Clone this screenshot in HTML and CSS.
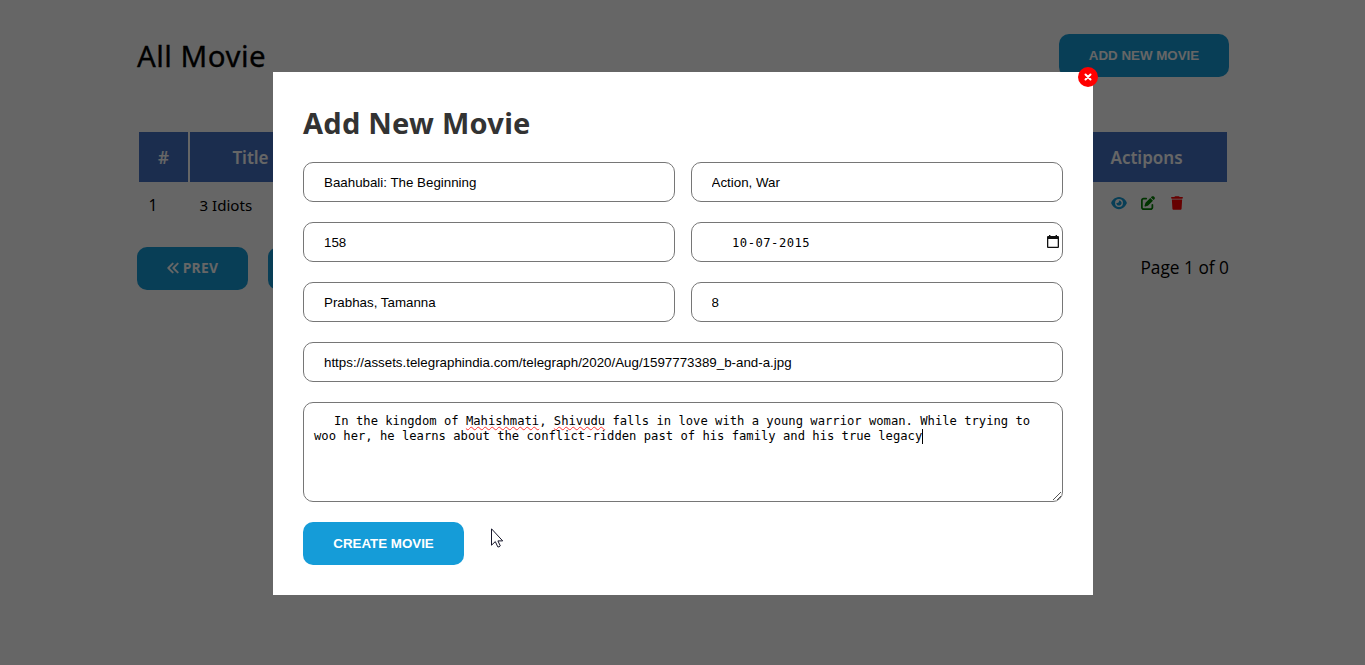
FILE: index.html
```html
<!DOCTYPE html>
<html lang="en">
<head>
<meta charset="utf-8">
<title>All Movie</title>
<link rel="stylesheet" href="styles.css">
</head>
<body>
<main class="page">
  <header class="page-head">
    <h1 class="page-title">All Movie</h1>
    <button class="btn btn-add">ADD NEW MOVIE</button>
  </header>
  <section class="table">
    <div class="th">#</div>
    <div class="th">Title</div>
    <div class="th"></div>
    <div class="th th-actions">Actipons</div>
    <div class="td td-num">1</div>
    <div class="td">3 Idiots</div>
    <div class="td"></div>
    <div class="td actions">
      <svg class="icon-eye" viewBox="0 0 576 512"><path fill="#159cd8" d="M288 32c-80.800 0-145.500 36.800-192.600 80.600C48.600 156 17.300 208 2.500 243.700c-3.300 7.900-3.300 16.700 0 24.600C17.300 304 48.600 356 95.400 399.400C142.500 443.200 207.200 480 288 480s145.500-36.800 192.600-80.600c46.800-43.500 78.100-95.400 93-131.100c3.300-7.900 3.300-16.700 0-24.600c-14.900-35.700-46.200-87.700-93-131.100C433.500 68.800 368.800 32 288 32zM144 256a144 144 0 1 1 288 0 144 144 0 1 1-288 0zm144-64c0 35.300-28.700 64-64 64c-7.100 0-13.900-1.200-20.300-3.300c-5.500-1.800-11.900 1.600-11.700 7.400c.3 6.900 1.300 13.800 3.200 20.700c13.700 51.200 66.400 81.600 117.600 67.900s81.600-66.400 67.900-117.600c-11.100-41.500-47.800-69.400-88.600-71.100c-5.800-.2-9.200 6.100-7.400 11.700c2.100 6.400 3.300 13.200 3.300 20.300z"/></svg>
      <svg class="icon-edit" viewBox="0 0 512 512"><path fill="green" d="M471.600 21.700c-21.900-21.900-57.300-21.900-79.200 0L362.300 51.700l97.900 97.900 30.100-30.100c21.900-21.900 21.900-57.300 0-79.200L471.600 21.700zm-299.200 220c-6.100 6.100-10.800 13.600-13.500 21.900l-29.600 88.800c-2.900 8.600-.6 18.100 5.800 24.600s15.900 8.700 24.600 5.800l88.800-29.600c8.200-2.700 15.700-7.400 21.900-13.500L437.700 172.300 339.700 74.300 172.400 241.700zM96 64C43 64 0 107 0 160V416c0 53 43 96 96 96H352c53 0 96-43 96-96V320c0-17.700-14.300-32-32-32s-32 14.300-32 32v96c0 17.700-14.300 32-32 32H96c-17.700 0-32-14.300-32-32V160c0-17.700 14.300-32 32-32h96c17.700 0 32-14.300 32-32s-14.300-32-32-32H96z"/></svg>
      <svg class="icon-trash" viewBox="0 0 448 512"><path fill="red" d="M135.200 17.700L128 32H32C14.300 32 0 46.300 0 64S14.300 96 32 96H416c17.700 0 32-14.300 32-32s-14.300-32-32-32H320l-7.200-14.300C307.400 6.800 296.300 0 284.200 0H163.800c-12.100 0-23.200 6.800-28.600 17.700zM416 128H32L53.200 467c1.600 25.300 22.600 45 47.900 45H346.900c25.300 0 46.300-19.700 47.900-45L416 128z"/></svg>
    </div>
  </section>
  <footer class="pager">
    <button class="btn btn-page"><svg class="icon-prev" viewBox="0 0 12 12" fill="none" stroke="#fff" stroke-width="1.900" stroke-linecap="round" stroke-linejoin="round"><path d="M5.700 1.600 1.300 6l4.400 4.400M10.700 1.600 6.300 6l4.400 4.400"/></svg><span>PREV</span></button>
    <button class="btn btn-page" aria-label="Next"></button>
    <span class="page-info">Page 1 of 0</span>
  </footer>
</main>

<div class="overlay">
  <form class="modal">
    <button type="button" class="close" aria-label="Close"><svg viewBox="0 0 10 10"><path d="M2.500 2.500l5 5M7.500 2.500 2.500 7.500" stroke="#fff" stroke-width="2" stroke-linecap="round"/></svg></button>
    <h2 class="modal-title">Add New Movie</h2>
    <div class="fields">
      <input class="field" value="Baahubali: The Beginning">
      <input class="field right" value="Action, War">
      <input class="field" value="158">
      <div class="field date"><span>10-07-2015</span><svg class="icon-cal" viewBox="0 0 12 13"><path fill="#111" fill-rule="evenodd" d="M2 0h1.400v1h5.200V0H10v1h1q1 0 1 1v10q0 1-1 1H1q-1 0-1-1V2q0-1 1-1h1zM1.300 4v7.700h9.400V4z"/></svg></div>
      <input class="field" value="Prabhas, Tamanna">
      <input class="field right" value="8">
      <input class="field wide" value="https://assets.telegraphindia.com/telegraph/2020/Aug/1597773389_b-and-a.jpg">
      <div class="field wide area">
        <p class="area-text">In the kingdom of <span class="typo">Mahishmati</span>, <span class="typo">Shivudu</span> falls in love with a young warrior woman. While trying to<br>woo her, he learns about the conflict-ridden past of his family and his true legacy<i class="caret"></i></p>
        <svg class="grip" viewBox="0 0 10 10" stroke="#555" stroke-width="1"><path d="M1 9 9 1M5 9 9 5"/></svg>
      </div>
    </div>
    <button type="button" class="btn btn-create">CREATE MOVIE</button>
  </form>
</div>
<svg class="cursor" viewBox="0 0 13 20"><path fill="#fff" stroke="#15152a" stroke-width="1" d="M.5.800v16.400l3.800-3.600 2.500 5.300q1.300.500 2.500-1l-2.400-5h4.800z"/></svg>
</body>
</html>
```
FILE: styles.css
```css
* { box-sizing: border-box; }
body {
  margin: 0;
  height: 665px;
  overflow: hidden;
  background: #fff;
  color: #000;
  font-family: "Noto Sans", "Open Sans", sans-serif;
}
h1, h2, p { margin: 0; }
.page { width: 1092px; margin: 0 auto 0 137px; padding-top: 34px; }
.page-head { display: flex; justify-content: space-between; height: 96px; }
.page-title {
  font-size: 29.500px;
  font-weight: 400;
  line-height: 44px;
  letter-spacing: 0.450px;
  -webkit-text-stroke: 0.300px #000;
}
.btn {
  height: 43px;
  padding: 0;
  border: 0;
  border-radius: 10px;
  background: #159cd8;
  color: #fff;
  font: bold 13.330px "Liberation Sans", Arial, sans-serif;
}
.btn-add { width: 170px; }
.table {
  display: grid;
  grid-template-columns: 49px 121px 1fr 161px;
  grid-template-rows: 50px 43px;
  gap: 2px;
  padding: 2px;
}
.th {
  background: #4472c4;
  color: #fff;
  font-size: 17px;
  font-weight: 600;
  line-height: 51px;
  text-align: center;
}
.td { padding-left: 9.500px; font-size: 15.600px; line-height: 42px; }
.td:nth-child(6) { font-size: 15.100px; }
.actions { display: flex; align-items: flex-start; padding: 12px 0 0 45px; }
.icon-eye { width: 16px; height: 14px; }
.icon-edit { width: 14px; height: 14px; margin-left: 14px; }
.icon-trash { width: 12px; height: 14px; margin-left: 15.500px; }
.pager { display: flex; align-items: center; gap: 20px; margin-top: 18px; }
.btn-page {
  display: flex;
  align-items: center;
  justify-content: center;
  gap: 4px;
  width: 111px;
  padding-bottom: 2px;
  font-family: "Open Sans", sans-serif;
  font-weight: 700;
  font-size: 13.800px;
  letter-spacing: 0.300px;
}
.icon-prev { width: 12px; height: 12px; }
.page-info { margin-left: auto; padding-bottom: 2px; font-family: "Open Sans", sans-serif; font-size: 17.300px; }
.overlay {
  position: fixed;
  inset: 0;
  display: flex;
  justify-content: center;
  align-items: flex-start;
  padding-top: 72px;
  background: rgba(0, 0, 0, 0.6);
}
.modal {
  position: relative;
  width: 820px;
  height: 523px;
  margin-left: 1px;
  padding: 29px 30px 30px;
  background: #fff;
}
.modal-title {
  height: 61px;
  color: #333;
  font-size: 29px;
  font-weight: 700;
  line-height: 43px;
  letter-spacing: 0.250px;
  white-space: nowrap;
}
.close {
  position: absolute;
  top: -5.500px;
  right: -5px;
  display: grid;
  place-items: center;
  width: 20px;
  height: 20px;
  padding: 0;
  border: 0;
  border-radius: 50%;
  background: red;
}
.close svg { width: 10px; height: 10px; }
.fields { display: grid; grid-template-columns: 372px 372px; gap: 20px 16px; }
.field {
  width: 100%;
  height: 40px;
  padding: 0 20px;
  border: 1px solid #767676;
  border-radius: 10px;
  background: #fff;
  color: #000;
  font: 13.330px "Liberation Sans", Arial, sans-serif;
}
.right { padding-left: 19.500px; }
.wide { grid-column: 1 / -1; }
.date {
  display: flex;
  align-items: center;
  justify-content: space-between;
  padding: 1px 3px 0 40px;
  font: 12.170px "DejaVu Sans Mono", monospace;
  letter-spacing: 0.500px;
}
.icon-cal { width: 12px; height: 13px; margin-top: -3px; }
.area {
  display: flex;
  height: 100px;
  padding: 11px 0 0 10px;
  font: 12.180px/15px "DejaVu Sans Mono", monospace;
}
.area-text { flex: 1; text-indent: 20px; white-space: nowrap; }
.typo { text-decoration: underline wavy #f33 0.700px; text-underline-offset: 1px; text-decoration-skip-ink: none; }
.caret { display: inline-block; width: 1px; height: 15px; background: #000; vertical-align: -4px; }
.grip { align-self: flex-end; width: 10px; height: 10px; }
.btn-create { display: block; width: 161px; margin-top: 20px; }
.cursor { position: fixed; left: 491px; top: 528px; width: 13px; height: 20px; }
```
